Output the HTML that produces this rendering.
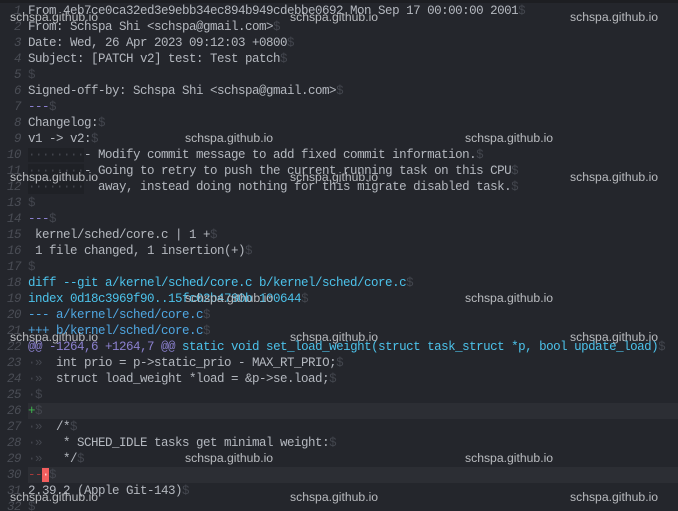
<!DOCTYPE html>
<html><head><meta charset="utf-8"><style>
html,body{margin:0;padding:0;background:#24262c;width:678px;height:511px;overflow:hidden;position:relative}
.top{position:absolute;left:0;top:0;width:678px;height:3px;background:#1d1e22}
.hl{position:absolute;left:28px;width:650px;height:16px;background:#2c2e34}
.ln{position:absolute;left:0;height:16px;line-height:16px;font-family:"Liberation Mono",monospace;font-size:12.5px;letter-spacing:-0.5px;white-space:pre;color:#b4b8bf}
.n{position:absolute;right:657px;color:#4a4d55;font-style:italic;text-align:right}
.t{position:absolute;left:28px}
.d{color:#43464e}
.p{color:#8b80cf}
.c{color:#4cc2ea}
.b{color:#4fa7e2}
.g{color:#3fb94f}
.r{color:#a83a3a}
.tabbg{background:#1f2126}
.cur{background:#f25e5e;color:#ffd0d0}
.wm{position:absolute;font-family:"Liberation Sans",sans-serif;font-size:12.2px;color:#b9bbbf;line-height:14px;white-space:nowrap}
</style></head><body>
<div class="top"></div>
<div class="hl" style="top:403px"></div>
<div class="hl" style="top:467px"></div>

<div class="ln" style="top:3px;width:678px"><span class="n" style="left:0;width:21px">1</span><span class="t">From 4eb7ce0ca32ed3e9ebb34ec894b949cdebbe0692 Mon Sep 17 00:00:00 2001<span class="d">$</span></span></div>
<div class="ln" style="top:19px;width:678px"><span class="n" style="left:0;width:21px">2</span><span class="t">From: Schspa Shi &lt;schspa@gmail.com&gt;<span class="d">$</span></span></div>
<div class="ln" style="top:35px;width:678px"><span class="n" style="left:0;width:21px">3</span><span class="t">Date: Wed, 26 Apr 2023 09:12:03 +0800<span class="d">$</span></span></div>
<div class="ln" style="top:51px;width:678px"><span class="n" style="left:0;width:21px">4</span><span class="t">Subject: [PATCH v2] test: Test patch<span class="d">$</span></span></div>
<div class="ln" style="top:67px;width:678px"><span class="n" style="left:0;width:21px">5</span><span class="t"><span class="d">$</span></span></div>
<div class="ln" style="top:83px;width:678px"><span class="n" style="left:0;width:21px">6</span><span class="t">Signed-off-by: Schspa Shi &lt;schspa@gmail.com&gt;<span class="d">$</span></span></div>
<div class="ln" style="top:99px;width:678px"><span class="n" style="left:0;width:21px">7</span><span class="t"><span class="p">---</span><span class="d">$</span></span></div>
<div class="ln" style="top:115px;width:678px"><span class="n" style="left:0;width:21px">8</span><span class="t">Changelog:<span class="d">$</span></span></div>
<div class="ln" style="top:131px;width:678px"><span class="n" style="left:0;width:21px">9</span><span class="t">v1 -&gt; v2:<span class="d">$</span></span></div>
<div class="ln" style="top:147px;width:678px"><span class="n" style="left:0;width:21px">10</span><span class="t"><span class="d tabbg">········</span>- Modify commit message to add fixed commit information.<span class="d">$</span></span></div>
<div class="ln" style="top:163px;width:678px"><span class="n" style="left:0;width:21px">11</span><span class="t"><span class="d tabbg">········</span>- Going to retry to push the current running task on this CPU<span class="d">$</span></span></div>
<div class="ln" style="top:179px;width:678px"><span class="n" style="left:0;width:21px">12</span><span class="t"><span class="d tabbg">········</span>  away, instead doing nothing for this migrate disabled task.<span class="d">$</span></span></div>
<div class="ln" style="top:195px;width:678px"><span class="n" style="left:0;width:21px">13</span><span class="t"><span class="d">$</span></span></div>
<div class="ln" style="top:211px;width:678px"><span class="n" style="left:0;width:21px">14</span><span class="t"><span class="p">---</span><span class="d">$</span></span></div>
<div class="ln" style="top:227px;width:678px"><span class="n" style="left:0;width:21px">15</span><span class="t"> kernel/sched/core.c | 1 +<span class="d">$</span></span></div>
<div class="ln" style="top:243px;width:678px"><span class="n" style="left:0;width:21px">16</span><span class="t"> 1 file changed, 1 insertion(+)<span class="d">$</span></span></div>
<div class="ln" style="top:259px;width:678px"><span class="n" style="left:0;width:21px">17</span><span class="t"><span class="d">$</span></span></div>
<div class="ln" style="top:275px;width:678px"><span class="n" style="left:0;width:21px">18</span><span class="t"><span class="c">diff --git a/kernel/sched/core.c b/kernel/sched/core.c</span><span class="d">$</span></span></div>
<div class="ln" style="top:291px;width:678px"><span class="n" style="left:0;width:21px">19</span><span class="t"><span class="c">index 0d18c3969f90..15fc02b4780b 100644</span><span class="d">$</span></span></div>
<div class="ln" style="top:307px;width:678px"><span class="n" style="left:0;width:21px">20</span><span class="t"><span class="b">--- a/kernel/sched/core.c</span><span class="d">$</span></span></div>
<div class="ln" style="top:323px;width:678px"><span class="n" style="left:0;width:21px">21</span><span class="t"><span class="b">+++ b/kernel/sched/core.c</span><span class="d">$</span></span></div>
<div class="ln" style="top:339px;width:678px"><span class="n" style="left:0;width:21px">22</span><span class="t"><span class="p">@@ -1264,6 +1264,7 @@</span> <span class="c">static void set_load_weight(struct task_struct *p, bool update_load)</span><span class="d">$</span></span></div>
<div class="ln" style="top:355px;width:678px"><span class="n" style="left:0;width:21px">23</span><span class="t"><span class="d">·» </span> int prio = p-&gt;static_prio - MAX_RT_PRIO;<span class="d">$</span></span></div>
<div class="ln" style="top:371px;width:678px"><span class="n" style="left:0;width:21px">24</span><span class="t"><span class="d">·» </span> struct load_weight *load = &amp;p-&gt;se.load;<span class="d">$</span></span></div>
<div class="ln" style="top:387px;width:678px"><span class="n" style="left:0;width:21px">25</span><span class="t"><span class="d">·$</span></span></div>
<div class="ln" style="top:403px;width:678px"><span class="n" style="left:0;width:21px">26</span><span class="t"><span class="g">+</span><span class="d">$</span></span></div>
<div class="ln" style="top:419px;width:678px"><span class="n" style="left:0;width:21px">27</span><span class="t"><span class="d">·» </span> /*<span class="d">$</span></span></div>
<div class="ln" style="top:435px;width:678px"><span class="n" style="left:0;width:21px">28</span><span class="t"><span class="d">·» </span>  * SCHED_IDLE tasks get minimal weight:<span class="d">$</span></span></div>
<div class="ln" style="top:451px;width:678px"><span class="n" style="left:0;width:21px">29</span><span class="t"><span class="d">·» </span>  */<span class="d">$</span></span></div>
<div class="ln" style="top:467px;width:678px"><span class="n" style="left:0;width:21px">30</span><span class="t"><span class="r">--</span><span class="cur">·</span><span class="d">$</span></span></div>
<div class="ln" style="top:483px;width:678px"><span class="n" style="left:0;width:21px">31</span><span class="t">2.39.2 (Apple Git-143)<span class="d">$</span></span></div>
<div class="ln" style="top:499px;width:678px"><span class="n" style="left:0;width:21px">32</span><span class="t"><span class="d">$</span></span></div>

<div class="wm" style="left:10px;top:10px">schspa.github.io</div>
<div class="wm" style="left:290px;top:10px">schspa.github.io</div>
<div class="wm" style="left:570px;top:10px">schspa.github.io</div>
<div class="wm" style="left:185px;top:131px">schspa.github.io</div>
<div class="wm" style="left:465px;top:131px">schspa.github.io</div>
<div class="wm" style="left:10px;top:170px">schspa.github.io</div>
<div class="wm" style="left:290px;top:170px">schspa.github.io</div>
<div class="wm" style="left:570px;top:170px">schspa.github.io</div>
<div class="wm" style="left:185px;top:291px">schspa.github.io</div>
<div class="wm" style="left:465px;top:291px">schspa.github.io</div>
<div class="wm" style="left:10px;top:330px">schspa.github.io</div>
<div class="wm" style="left:290px;top:330px">schspa.github.io</div>
<div class="wm" style="left:570px;top:330px">schspa.github.io</div>
<div class="wm" style="left:185px;top:451px">schspa.github.io</div>
<div class="wm" style="left:465px;top:451px">schspa.github.io</div>
<div class="wm" style="left:10px;top:490px">schspa.github.io</div>
<div class="wm" style="left:290px;top:490px">schspa.github.io</div>
<div class="wm" style="left:570px;top:490px">schspa.github.io</div>
</body></html>
